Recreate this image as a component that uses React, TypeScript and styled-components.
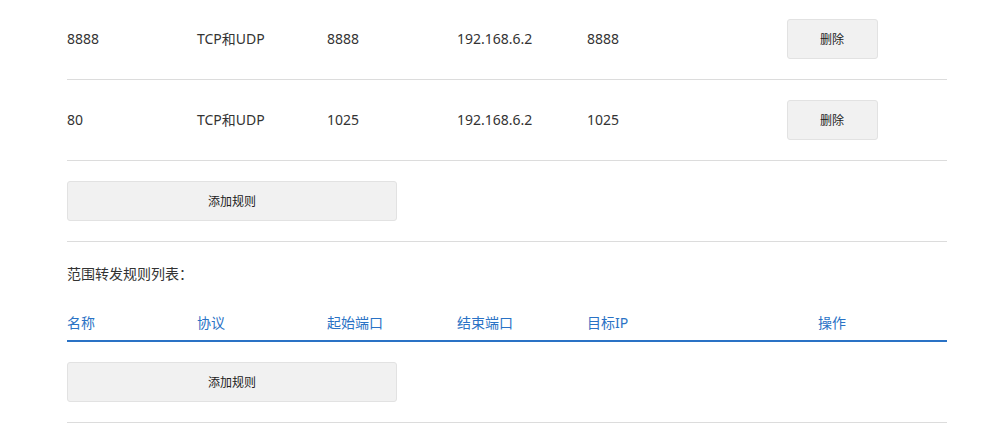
import React from "react";
import styled, { createGlobalStyle } from "styled-components";

const GlobalStyle = createGlobalStyle`
  body {
    margin: 0;
    background: #ffffff;
    font-family: "Noto Sans", "Noto Sans CJK SC", sans-serif;
    color: #333333;
  }
`;

const rules = [
  { ext: "8888", proto: "TCP和UDP", inPort: "8888", ip: "192.168.6.2", port: "8888" },
  { ext: "80", proto: "TCP和UDP", inPort: "1025", ip: "192.168.6.2", port: "1025" },
];

const headers = ["名称", "协议", "起始端口", "结束端口", "目标IP"];

function App() {
  return (
    <StylePage>
      <GlobalStyle />
      <StyleList>
        {rules.map((r, i) => (
          <StyleRow key={i} $first={i === 0}>
            <StyleCell>{r.ext}</StyleCell>
            <StyleCell>{r.proto}</StyleCell>
            <StyleCell>{r.inPort}</StyleCell>
            <StyleCell>{r.ip}</StyleCell>
            <StyleCell>{r.port}</StyleCell>
            <StyleAction>
              <StyleDelete>删除</StyleDelete>
            </StyleAction>
          </StyleRow>
        ))}
      </StyleList>
      <StyleAddBar>
        <StyleAdd>添加规则</StyleAdd>
      </StyleAddBar>
      <StyleTitle>范围转发规则列表：</StyleTitle>
      <StyleHead>
        {headers.map((h) => (
          <StyleHeadCell key={h}>{h}</StyleHeadCell>
        ))}
        <StyleHeadCell $center>操作</StyleHeadCell>
      </StyleHead>
      <StyleAddBar>
        <StyleAdd>添加规则</StyleAdd>
      </StyleAddBar>
    </StylePage>
  );
}

const StylePage = styled.div`
  width: 880px;
  padding-left: 67px;
  font-size: 14px;
`;

const StyleList = styled.div`
  display: flex;
  flex-direction: column;
`;

const StyleRow = styled.div<{ $first?: boolean }>`
  display: grid;
  grid-template-columns: repeat(5, 130px) 1fr;
  align-items: center;
  height: 80px;
  margin-top: ${(p) => (p.$first ? "-1px" : "0")};
  border-bottom: 1px solid #dcdcdc;
`;

const StyleCell = styled.div`
  line-height: 20px;
  color: #333333;
`;

const StyleAction = styled.div`
  display: flex;
  justify-content: center;
`;

const StyleDelete = styled.button`
  width: 91px;
  height: 40px;
  background: #f1f1f1;
  border: 1px solid #e2e2e2;
  border-radius: 3px;
  font-family: inherit;
  font-size: 12px;
  color: #222222;
  padding: 0;
`;

const StyleAddBar = styled.div`
  padding: 20px 0;
  border-bottom: 1px solid #dcdcdc;
`;

const StyleAdd = styled.button`
  display: block;
  width: 330px;
  height: 40px;
  background: #f1f1f1;
  border: 1px solid #e2e2e2;
  border-radius: 3px;
  font-family: inherit;
  font-size: 12px;
  color: #222222;
  padding: 0;
`;

const StyleTitle = styled.div`
  margin-top: 22px;
  line-height: 20px;
  color: #333333;
`;

const StyleHead = styled.div`
  display: grid;
  grid-template-columns: repeat(5, 130px) 1fr;
  padding: 29px 0 7px;
  border-bottom: 2px solid #2a72c5;
`;

const StyleHeadCell = styled.div<{ $center?: boolean }>`
  line-height: 20px;
  color: #2a72c5;
  text-align: ${(p) => (p.$center ? "center" : "left")};
`;

export default App;
